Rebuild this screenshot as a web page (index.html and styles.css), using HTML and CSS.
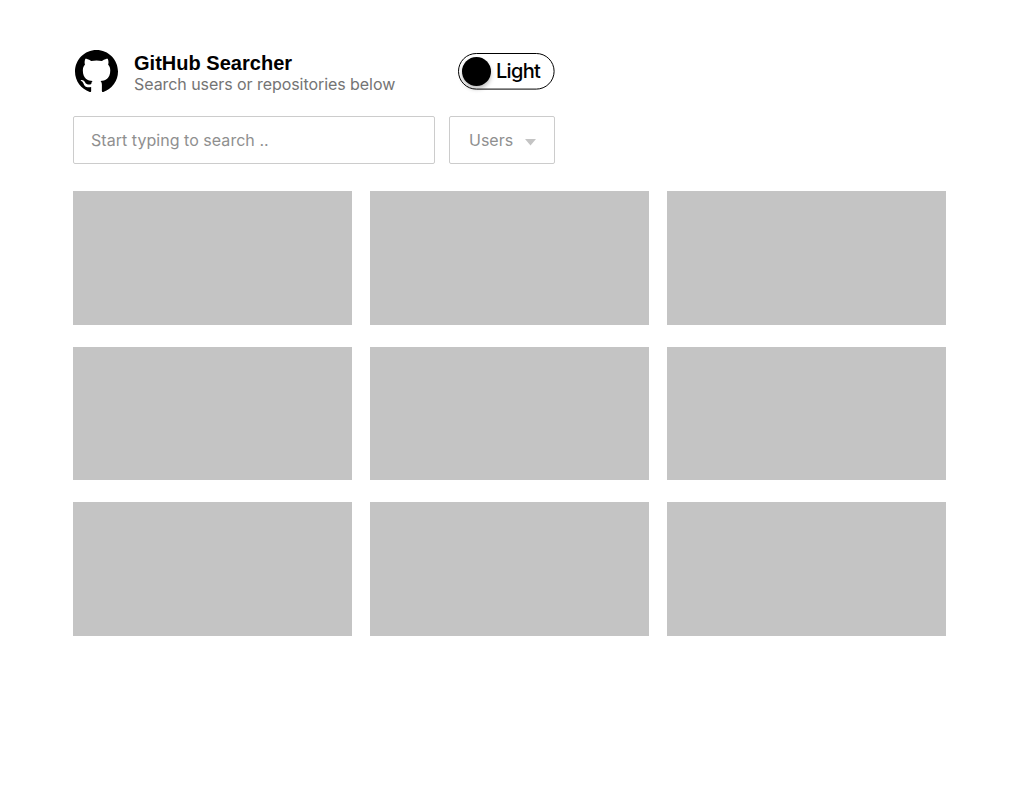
FILE: index.html
```html
<!DOCTYPE html>
<html lang="en">
<head>
<meta charset="utf-8">
<title>GitHub Searcher</title>
<link rel="stylesheet" href="styles.css">
</head>
<body>
<main class="page">
  <header class="header">
    <div class="brand">
      <svg class="logo" viewBox="0 0 16 15.61" preserveAspectRatio="none" aria-hidden="true"><path fill-rule="evenodd" d="M8 0C3.58 0 0 3.58 0 8c0 3.54 2.29 6.53 5.47 7.59.4.07.55-.17.55-.38 0-.19-.01-.82-.01-1.49-2.01.37-2.53-.49-2.69-.94-.09-.23-.48-.94-.82-1.13-.28-.15-.68-.52-.01-.53.63-.01 1.08.58 1.23.82.72 1.21 1.87.87 2.33.66.07-.52.28-.87.51-1.07-1.78-.2-3.64-.89-3.64-3.95 0-.87.31-1.59.82-2.15-.08-.2-.36-1.02.08-2.12 0 0 .67-.21 2.2.82.64-.18 1.32-.27 2-.27s1.36.09 2 .27c1.53-1.04 2.2-.82 2.2-.82.44 1.1.16 1.92.08 2.12.51.56.82 1.27.82 2.15 0 3.07-1.87 3.75-3.65 3.95.29.25.54.73.54 1.48 0 1.07-.01 1.93-.01 2.2 0 .21.15.46.55.38A8.01 8.01 0 0 0 16 8c0-4.42-3.58-8-8-8z"/></svg>
      <div class="heading">
        <h1 class="title">GitHub Searcher</h1>
        <p class="subtitle">Search users or repositories below</p>
      </div>
    </div>
    <button class="toggle" type="button"><svg class="toggle-track" viewBox="0 0 97 37" aria-hidden="true"><rect x=".5" y=".5" width="95.6" height="35.6" rx="17.8"/></svg><span class="knob"></span><span class="toggle-label">Light</span></button>
  </header>
  <form class="search">
    <input class="search-input" type="text" placeholder="Start typing to search .." aria-label="Search">
    <button class="select" type="button"><span class="select-label">Users</span><svg class="caret" viewBox="0 0 11 7" aria-hidden="true"><path d="M0 0h11L5.5 6.5z"/></svg></button>
  </form>
  <section class="results">
    <div class="card"></div><div class="card"></div><div class="card"></div>
    <div class="card"></div><div class="card"></div><div class="card"></div>
    <div class="card"></div><div class="card"></div><div class="card"></div>
  </section>
</main>
</body>
</html>
```
FILE: styles.css
```css
* { box-sizing: border-box; }
body { margin: 0; background: #fff; font-family: Inter, sans-serif; }
button { font: inherit; background: none; padding: 0; }
.page { padding: 50px 79px 0 73px; }
.header { display: flex; justify-content: space-between; width: 482px; height: 66px; padding-left: 2px; }
.brand { display: flex; gap: 16px; }
.logo { width: 43px; height: 42px; }
.title { margin: 1px 0 0; font: bold 20px/24px "Liberation Sans", sans-serif; letter-spacing: 0.02px; color: #000; white-space: nowrap; }
.subtitle { margin: 0; font-size: 16px; line-height: 19px; letter-spacing: -0.06px; color: #747474; white-space: nowrap; }
.toggle { position: relative; display: flex; align-items: center; width: 97px; height: 37px; margin-top: 3px; padding-left: 4px; border: 0; color: #000; }
.toggle-track { position: absolute; inset: 0; width: 97px; height: 37px; fill: none; stroke: #000; }
.knob { width: 29px; height: 29px; border-radius: 50%; background: #000; box-shadow: 0 3px 4px rgba(0, 0, 0, 0.25); }
.toggle-label { margin: 0 0 2px 5px; font-size: 20px; line-height: 24px; font-weight: 500; letter-spacing: -0.7px; }
.search { display: flex; gap: 14px; }
.search-input, .select { height: 48px; border: 1px solid #ccc; border-radius: 2px; color: #8f8f8f; font-size: 16px; }
.search-input { width: 362px; padding: 0 17px; font-family: inherit; letter-spacing: 0.04px; }
.search-input::placeholder { color: #8f8f8f; opacity: 1; }
.select { display: flex; align-items: center; width: 106px; padding-left: 19px; }
.caret { width: 11px; height: 7px; margin: 4px 0 0 12px; fill: #c4c4c4; }
.results { display: grid; grid-template-columns: repeat(3, 279px); grid-template-rows: 134px 133px 134px; gap: 22px 18px; margin-top: 27px; }
.card { background: #c4c4c4; }
```
